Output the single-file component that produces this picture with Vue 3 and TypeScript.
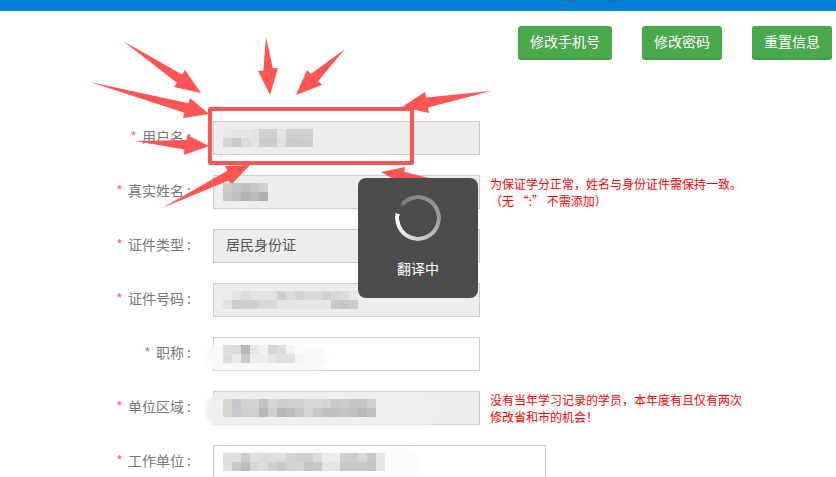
<script setup lang="ts">
type P = [number, number]
interface Arrow { tail: P; tip: P; a: P; b: P }
interface Row { label: string; wide?: boolean; editable?: boolean; text?: string; mosaic?: string[][]; note?: string[] }

const rows: Row[] = [
  { label: '用户名', mosaic: [
    ['#e8e8e8','#e6e6e6','#e6e6e6','#e3e3e3','#d2d2d2','#d0d0d0','#e4e4e4','#d0d0d0','#cfcfcf','#d0d0d0'],
    ['#d6d5d3','#c8c8c6','#dbdbd9','#e3e3e3','#cbcbcb','#cbcbcb','#e0e0e0','#cbcbcb','#cbcbcb','#cdcdcd']] },
  { label: '真实姓名', mosaic: [
    ['#cdcbc8','#c5c5c7','#c0bfbe','#c8c8c8','#d0d0d2'],
    ['#c9c7c4','#bebfc1','#b4b3b1','#bcbcbc','#b0b0b2']],
    note: ['为保证学分正常，姓名与身份证件需保持一致。', '（无 “:” 不需添加）'] },
  { label: '证件类型', text: '居民身份证' },
  { label: '证件号码', mosaic: [
    ['#ececec','#e4e4e4','#dcdcdc','#e2e2e2','#e2e2e2','#e2e2e2','#cecece','#dddddd','#d4d4d4','#d8d8d8','#d8d8d8','#d0d0d0','#d8d8d8','#dcdcdc','#e8e8e8'],
    ['#dfe2e2','#cfcccc','#d0cece','#cfcfcf','#d8d8d8','#d8d8d8','#e4e4e4','#e4e4e4','#e6e6e6','#e6e6e6','#e6e6e6','#e6e6e6','#c9c9c9','#c6c6c6','#cbcbcb']] },
  { label: '职称', editable: true, mosaic: [
    ['#e0dedd','#d9dadb','#b9b7b6','#e4e8ee','#f2f2f2','#d5d5d5','#dcdcdc','#f3f5f5','#fafafa'],
    ['#dedad8','#e8ebee','#cec9c6','#e9eef2','#eeeeee','#e8e6e4','#e0e0e0','#e0e0e0','#f4f5f6']] },
  { label: '单位区域', mosaic: [
    ['#d8d6d4','#c8c8cc','#d4d2d2','#d4d2d2','#c2c2c6','#d8d6d2','#ccced0','#d0d0d0','#d0d0d0','#d8d8d8','#d8d8d8','#d4d4d4','#c8caca','#cbcbc9','#c8c4be','#c4c6c8','#d0d0d0'],
    ['#d8d4d0','#c8c9cc','#d0cdca','#d2cfcd','#b8b8bc','#d2cfca','#b8b8b9','#bfbdbb','#c8c8c6','#d4d6d6','#c8caca','#c0c0c0','#c0c0c0','#c4c4c4','#c0c0c0','#b8b8b8','#c0c0c0']],
    note: ['没有当年学习记录的学员，本年度有且仅有两次', '修改省和市的机会！'] },
  { label: '工作单位', wide: true, editable: true, mosaic: [
    ['#e0dfde','#e2e0de','#cfcdcc','#dfe0e2','#dcdcdc','#dedede','#dedede','#d4d2d2','#d2cfcc','#cdd0d4','#dcdcdc','#ecedf0','#ededed','#cfcfd2','#cdcdcd','#d8d8d8','#c8c8c8','#e4e6ea'],
    ['#e2e0de','#c8c8c8','#bcbaba','#d4d6da','#dcdcdc','#d0d0d0','#c8c8c8','#d2d2d4','#d8d6d2','#c4c4c4','#c8c8c8','#e4e6ea','#e6e4de','#c8c8cc','#c8c8c8','#c8c8c8','#c4c4c4','#e4e6ea']] },
]

const buttons = ['修改手机号', '修改密码', '重置信息']

const arrows: Arrow[] = [
  { tail: [123, 41], tip: [201, 93], a: [185, 70], b: [174, 87] },
  { tail: [266, 37], tip: [270, 95], a: [258, 71], b: [278, 68] },
  { tail: [345, 49], tip: [296, 95], a: [307, 70], b: [322, 85] },
  { tail: [90, 82], tip: [209, 114], a: [190, 98], b: [183, 118] },
  { tail: [135, 141], tip: [209, 146], a: [187, 135], b: [184, 155] },
  { tail: [162, 208], tip: [250, 165], a: [225, 166], b: [231, 185] },
  { tail: [491, 91], tip: [402, 107], a: [425, 92], b: [429, 113] },
  { tail: [480, 191], tip: [381, 172], a: [405, 167], b: [402, 184] },
]

function arrowPoints(ar: Arrow): string {
  const dx = ar.tip[0] - ar.tail[0]
  const dy = ar.tip[1] - ar.tail[1]
  const len2 = dx * dx + dy * dy
  const notch = (p: P): P => {
    const t = ((p[0] - ar.tail[0]) * dx + (p[1] - ar.tail[1]) * dy) / len2
    const ax = ar.tail[0] + dx * t
    const ay = ar.tail[1] + dy * t
    return [ax + (p[0] - ax) * 0.48, ay + (p[1] - ay) * 0.48]
  }
  const pts: P[] = [ar.tail, notch(ar.a), ar.a, ar.tip, ar.b, notch(ar.b)]
  return pts.map((p) => p.join(',')).join(' ')
}
</script>

<template>
  <div class="page">
    <header class="topbar"><span class="topbar-title">基本信息表</span></header>

    <div class="actions">
      <button v-for="b in buttons" :key="b" class="btn" type="button">{{ b }}</button>
    </div>

    <form class="form" @submit.prevent>
      <div v-for="r in rows" :key="r.label" class="row">
        <label class="label"><span class="star">*</span> {{ r.label }} :</label>
        <div class="field" :class="{ wide: r.wide, editable: r.editable }">
          <span v-if="r.text" class="field-text">{{ r.text }}</span>
          <div v-if="r.mosaic" class="mosaic">
            <div v-for="(line, i) in r.mosaic" :key="i" class="mosaic-line">
              <i v-for="(c, j) in line" :key="j" class="cell" :style="{ background: c }"></i>
            </div>
          </div>
        </div>
        <div v-if="r.note" class="note">
          <div v-for="n in r.note" :key="n">{{ n }}</div>
        </div>
      </div>
    </form>

    <svg class="marks" width="836" height="477" viewBox="0 0 836 477">
      <defs>
        <filter id="soft" x="-10%" y="-30%" width="120%" height="160%"><feGaussianBlur stdDeviation="2" /></filter>
      </defs>
      <g filter="url(#soft)">
        <rect x="205" y="345" width="122" height="25" rx="12" fill="#f8f8f8" />
        <rect x="206" y="395" width="232" height="31" rx="12" fill="#efefef" />
        <rect x="222" y="449" width="196" height="34" rx="12" fill="#fbfbfb" />
      </g>
      <polygon v-for="(a, i) in arrows" :key="i" :points="arrowPoints(a)" fill="#ff5555" />
      <rect x="210" y="109" width="202" height="54" fill="none" stroke="#ff5555" stroke-width="4" stroke-linejoin="round" />
    </svg>

    <div class="toast">
      <div class="spinner"></div>
      <div class="toast-text">翻译中</div>
    </div>
  </div>
</template>

<style>
html, body { margin: 0; overflow: hidden; background: #fff; }
</style>

<style scoped>
.page {
  position: relative;
  width: 836px;
  height: 477px;
  overflow: hidden;
  background: #fff;
  font-family: "Noto Sans CJK SC", "Noto Sans", sans-serif;
  font-size: 14px;
  color: #666;
}
.topbar {
  height: 11px;
  background: #0080d4;
  overflow: hidden;
  display: flex;
  justify-content: flex-end;
  padding-right: 203px;
}
.topbar-title {
  font-size: 14px;
  line-height: 20px;
  height: 20px;
  margin-top: -17px;
  color: #35648c;
}
.actions {
  display: flex;
  justify-content: flex-end;
  gap: 30px;
  padding: 15px 4px 0 0;
}
.btn {
  height: 34px;
  padding: 0 12px 3px;
  border: 0;
  border-bottom: 2px solid #449a47;
  border-radius: 3px;
  background: #4aa84d;
  color: #fff;
  font: inherit;
  line-height: 26px;
}
.form {
  margin-top: 61px;
  display: flex;
  flex-direction: column;
  gap: 20px;
}
.row {
  display: flex;
  align-items: center;
  height: 34px;
}
.label {
  width: 191px;
  margin-right: 22px;
  padding-bottom: 4px;
  text-align: right;
  white-space: nowrap;
  color: #777;
}
.star { color: #f46a7a; margin-right: 2px; }
.field {
  box-sizing: border-box;
  width: 267px;
  height: 34px;
  flex: none;
  display: flex;
  align-items: center;
  padding-left: 9px;
  border: 1px solid #ccc;
  background: #ededed;
}
.field.editable { background: #fff; }
.field.wide {
  width: 333px;
  height: 60px;
  align-self: flex-start;
  align-items: flex-start;
  padding-top: 7px;
}
.field-text { padding: 0 0 4px 3px; color: #555; }
.mosaic {
  position: relative;
  z-index: 2;
  display: flex;
  flex-direction: column;
}
.mosaic-line { display: flex; }
.cell { display: block; width: 9px; height: 9px; }
.note {
  margin-left: 10px;
  color: #f00;
  font-size: 12px;
  line-height: 17px;
  white-space: nowrap;
}
.marks {
  position: absolute;
  left: 0;
  top: 0;
  z-index: 1;
  pointer-events: none;
}
.toast {
  position: absolute;
  left: 358px;
  top: 178px;
  z-index: 3;
  box-sizing: border-box;
  width: 120px;
  height: 120px;
  padding-top: 17px;
  border-radius: 8px;
  background: #4c4c4c;
  display: flex;
  flex-direction: column;
  align-items: center;
}
.spinner {
  width: 46px;
  height: 46px;
  border-radius: 50%;
  background: conic-gradient(from 282deg, transparent 0deg, transparent 24deg, #808080 32deg, #9c9c9c 170deg, #ddd 280deg, #fff 360deg);
  -webkit-mask: radial-gradient(circle closest-side, transparent 18.5px, #000 19px);
  mask: radial-gradient(circle closest-side, transparent 18.5px, #000 19px);
}
.toast-text {
  margin-top: 17px;
  color: #fff;
  font-size: 14px;
  line-height: 20px;
}
</style>
